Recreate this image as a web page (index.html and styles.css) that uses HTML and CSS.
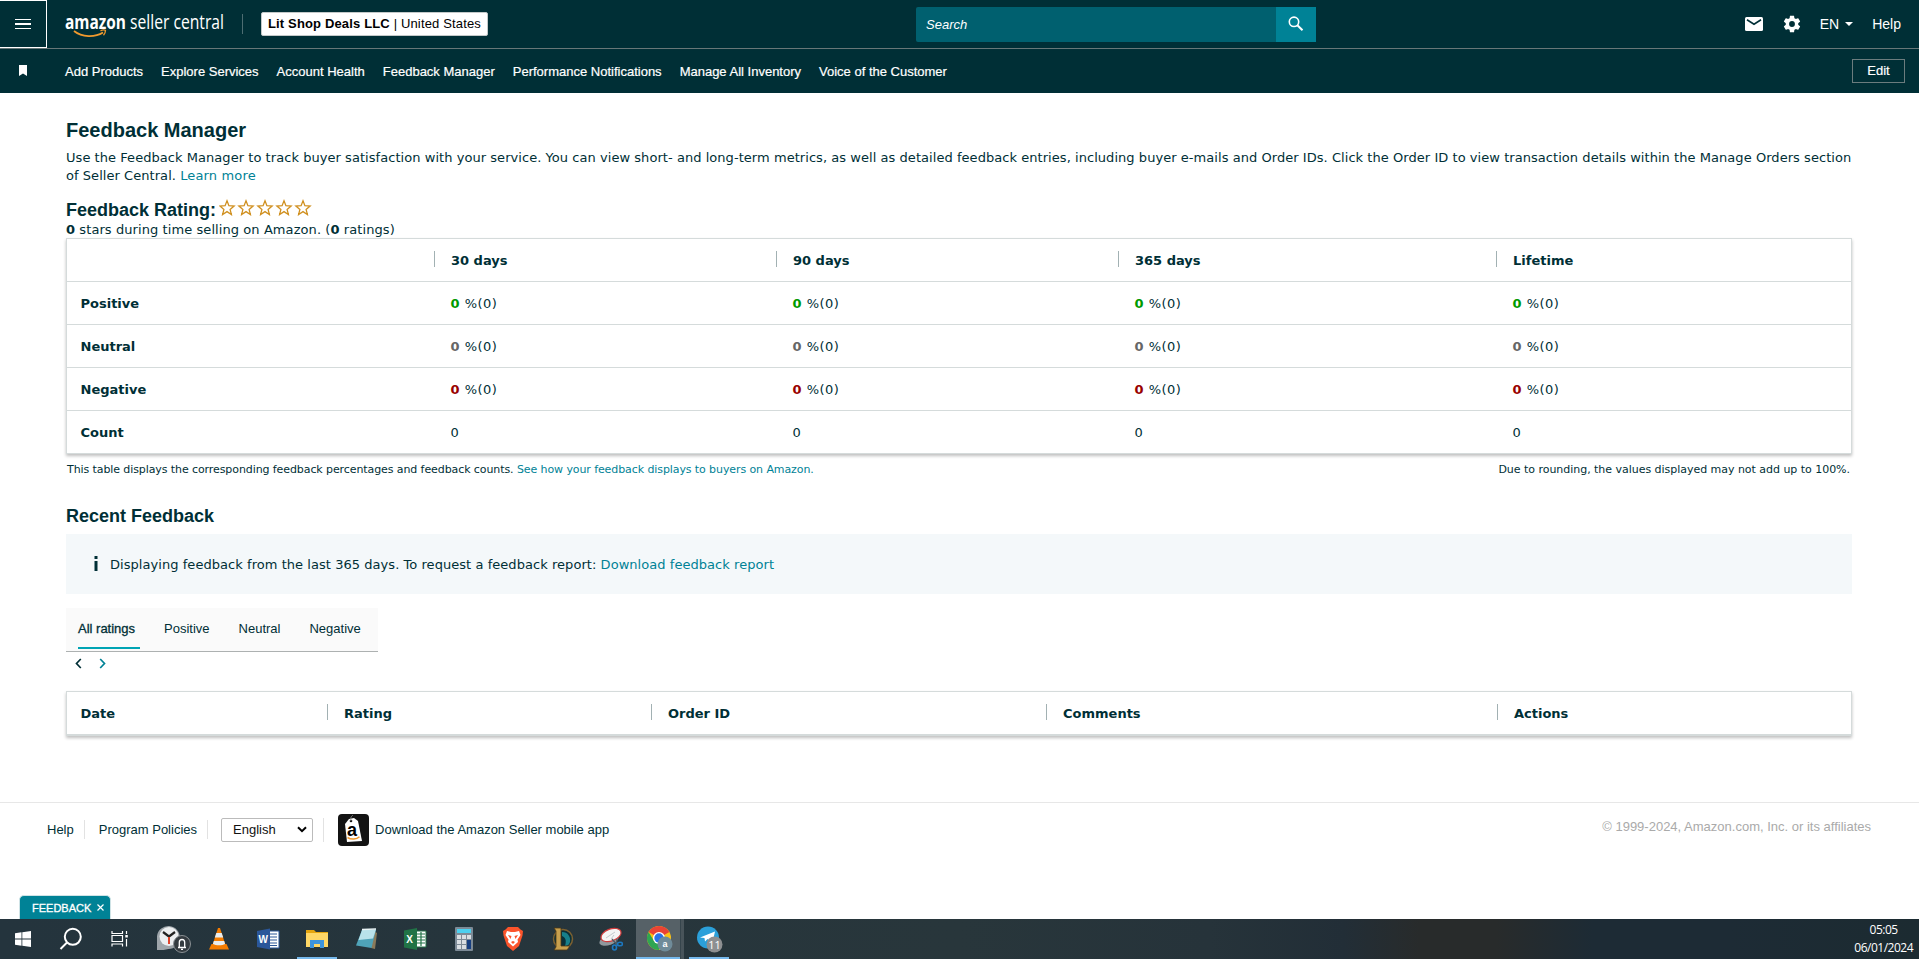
FILE: index.html
```html
<!DOCTYPE html>
<html lang="en">
<head>
  <meta charset="UTF-8">
  <meta name="viewport" content="width=device-width, initial-scale=1.0">
  <title>Feedback Manager</title>
  <link rel="stylesheet" href="styles.css">
</head>
<body>
  <header class="header">
    <div class="top-bar">
      <button class="menu-btn" aria-label="Menu"><span></span><span></span><span></span></button>
      <svg class="logo" width="162" height="40" viewBox="0 0 162 40">
        <text class="logo-bold" x="0" y="24" textLength="61" lengthAdjust="spacingAndGlyphs">amazon</text>
        <text class="logo-light" x="65" y="24" textLength="94" lengthAdjust="spacingAndGlyphs">seller central</text>
        <path d="M9 26c8 6.500 21 6.500 29 1.500" fill="none" stroke="#f19a2e" stroke-width="1.800"/>
        <path d="M35.500 25.800c2-1 4-1 5 -.5 0 2-.7 3.500-2 5" fill="none" stroke="#f19a2e" stroke-width="1.300"/>
      </svg>
      <div class="top-divider"></div>
      <button class="account"><b>Lit Shop Deals LLC</b>&nbsp;| United States</button>
      <div class="search">
        <div class="search-input">Search</div>
        <button class="search-btn" aria-label="Search">
          <svg width="18" height="18" viewBox="0 0 18 18" fill="none" stroke="#fff" stroke-width="1.600"><circle cx="7" cy="6.800" r="4.700"/><path d="M10.400 10.200L15.500 15.300" stroke-width="2"/></svg>
        </button>
      </div>
      <div class="top-links">
        <svg class="mail" width="18" height="14" viewBox="0 0 18 14"><rect width="18" height="14" rx="1.500" fill="#fff"/><path d="M2 2.800L9 7.200L16 2.800" fill="none" stroke="#002f36" stroke-width="1.600"/></svg>
        <svg class="gear" width="20" height="20" viewBox="0 0 24 24" fill="#fff"><path d="M19.430 12.980c.04-.32.07-.64.07-.98s-.03-.66-.07-.98l2.110-1.650c.19-.15.24-.42.12-.64l-2-3.460c-.12-.22-.39-.3-.61-.22l-2.490 1c-.52-.4-1.080-.73-1.690-.98l-.38-2.650C14.460 2.180 14.250 2 14 2h-4c-.25 0-.46.18-.49.42l-.38 2.650c-.61.25-1.170.59-1.690.98l-2.490-1c-.23-.09-.49 0-.61.22l-2 3.460c-.13.22-.07.49.12.64l2.110 1.650c-.04.32-.07.65-.07.98s.03.66.07.98l-2.110 1.650c-.19.15-.24.42-.12.64l2 3.460c.12.22.39.3.61.22l2.490-1c.52.4 1.080.73 1.690.98l.38 2.650c.03.24.24.42.49.42h4c.25 0 .46-.18.49-.42l.38-2.650c.61-.25 1.170-.59 1.690-.98l2.490 1c.23.09.49 0 .61-.22l2-3.460c.12-.22.07-.49-.12-.64l-2.110-1.650zM12 15.500a3.500 3.500 0 1 1 0-7 3.500 3.500 0 0 1 0 7z"/></svg>
        <span class="lang">EN</span>
        <span class="caret"></span>
        <span>Help</span>
      </div>
    </div>
    <nav class="nav-bar">
      <svg class="bookmark" width="8" height="11" viewBox="0 0 8 11"><path d="M0 0h8v11L4 8.500 0 11z" fill="#fff"/></svg>
      <a>Add Products</a>
      <a>Explore Services</a>
      <a>Account Health</a>
      <a>Feedback Manager</a>
      <a>Performance Notifications</a>
      <a>Manage All Inventory</a>
      <a>Voice of the Customer</a>
      <button class="edit-btn">Edit</button>
    </nav>
  </header>

  <main class="content">
    <h1>Feedback Manager</h1>
    <p class="intro"><span class="intro-line">Use the Feedback Manager to track buyer satisfaction with your service. You can view short- and long-term metrics, as well as detailed feedback entries, including buyer e-mails and Order IDs. Click the Order ID to view transaction details within the Manage Orders section</span><br>of Seller Central. <a>Learn more</a></p>

    <div class="rating">
      <h2>Feedback Rating:</h2>
      <svg class="stars" width="95" height="18" viewBox="0 0 95 18" fill="none" stroke="#d09020" stroke-width="1.300">
        <defs><path id="star" d="M8 1.800l1.900 4.900 5.200.3-4 3.400 1.300 5.100-4.400-2.900-4.400 2.900 1.300-5.100-4-3.400 5.200-.3z"/></defs>
        <use href="#star"/><use href="#star" x="19"/><use href="#star" x="38"/><use href="#star" x="57"/><use href="#star" x="76"/>
      </svg>
    </div>
    <p class="summary"><b>0</b> stars during time selling on Amazon. (<b>0</b> ratings)</p>

    <table class="panel metrics">
      <colgroup><col class="m1"><col class="m2"><col class="m2"><col class="m3"><col></colgroup>
      <tr><th></th><th>30 days</th><th>90 days</th><th>365 days</th><th>Lifetime</th></tr>
      <tr class="positive"><td>Positive</td><td><b>0</b> %(0)</td><td><b>0</b> %(0)</td><td><b>0</b> %(0)</td><td><b>0</b> %(0)</td></tr>
      <tr class="neutral"><td>Neutral</td><td><b>0</b> %(0)</td><td><b>0</b> %(0)</td><td><b>0</b> %(0)</td><td><b>0</b> %(0)</td></tr>
      <tr class="negative"><td>Negative</td><td><b>0</b> %(0)</td><td><b>0</b> %(0)</td><td><b>0</b> %(0)</td><td><b>0</b> %(0)</td></tr>
      <tr><td>Count</td><td>0</td><td>0</td><td>0</td><td>0</td></tr>
    </table>
    <div class="notes">
      <span class="note-left">This table displays the corresponding feedback percentages and feedback counts. <a>See how your feedback displays to buyers on Amazon.</a></span>
      <span class="note-right">Due to rounding, the values displayed may not add up to 100%.</span>
    </div>

    <h2 class="recent">Recent Feedback</h2>
    <div class="info">
      <svg width="4" height="15" viewBox="0 0 4 15" fill="#002f36"><rect x=".5" width="3" height="3"/><rect x=".5" y="5" width="3" height="10"/></svg>
      <span>Displaying feedback from the last 365 days. To request a feedback report: <a>Download feedback report</a></span>
    </div>

    <div class="tabs">
      <span class="tab active">All ratings</span>
      <span class="tab">Positive</span>
      <span class="tab">Neutral</span>
      <span class="tab">Negative</span>
    </div>
    <div class="pager">
      <svg width="7" height="11" viewBox="0 0 7 11" fill="none" stroke="#002f36" stroke-width="1.700"><path d="M5.800 1L1.500 5.500L5.800 10"/></svg>
      <svg width="7" height="11" viewBox="0 0 7 11" fill="none" stroke="#008296" stroke-width="1.700"><path d="M1.200 1L5.500 5.500L1.200 10"/></svg>
    </div>

    <table class="panel entries">
      <colgroup><col class="e1"><col class="e2"><col class="e3"><col class="e4"><col></colgroup>
      <tr><th>Date</th><th>Rating</th><th>Order ID</th><th>Comments</th><th>Actions</th></tr>
    </table>
  </main>

  <footer class="footer">
    <a>Help</a>
    <i class="sep"></i>
    <a>Program Policies</a>
    <i class="sep"></i>
    <div class="select">English
      <svg width="10" height="7" viewBox="0 0 10 7" fill="none" stroke="#000" stroke-width="2"><path d="M1 1.200L5 5.200L9 1.200"/></svg>
    </div>
    <i class="sep tall"></i>
    <svg class="app" width="31" height="32" viewBox="0 0 31 32">
      <rect width="31" height="32" rx="4" fill="#131313"/>
      <path d="M7 10l4-5 5-1 4 3 4 20-15 1z" fill="#fff"/>
      <circle cx="13" cy="7" r="1.300" fill="#131313"/>
      <path d="M13 7c-1-4 1-5 2-6" fill="none" stroke="#999" stroke-width=".8"/>
      <text x="9" y="21.500" class="app-letter">a</text>
      <path d="M9.500 23.500c4 2.500 9 2 12-.8" fill="none" stroke="#f19a2e" stroke-width="1.500"/>
    </svg>
    <a>Download the Amazon Seller mobile app</a>
    <span class="copyright">© 1999-2024, Amazon.com, Inc. or its affiliates</span>
  </footer>

  <div class="feedback-tab">FEEDBACK <svg width="7" height="7" viewBox="0 0 7 7" stroke="#fff" stroke-width="1.200"><path d="M.5.5l6 6M6.500.5l-6 6"/></svg></div>

  <div class="taskbar">
    <!-- start -->
    <div class="task"><svg width="24" height="24" viewBox="0 0 24 24" fill="#fff"><path d="M4 6.300l6.500-1v6.300H4zM11.300 5.200L20 4v7.600h-8.700zM4 12.400h6.500v6.300L4 17.800zM11.300 12.400H20V20l-8.700-1.200z"/></svg></div>
    <!-- search -->
    <div class="task left"><svg width="24" height="24" viewBox="0 0 24 24" fill="none" stroke="#fff" stroke-width="2"><circle cx="13.800" cy="9.800" r="8"/><path d="M8 15.500L1.500 22"/></svg></div>
    <!-- task view -->
    <div class="task left"><svg width="24" height="24" viewBox="0 0 24 24" fill="none" stroke="#fff" stroke-width="1.200"><path d="M4 4v2.500h10.500V4M4 19.500V17h10.500v2.500M4 8.500h10.500v6H4zM18.500 4v3M18.500 12v7.500"/><rect x="17.300" y="8" width="2.500" height="2.500" fill="#fff" stroke="none"/></svg></div>
    <!-- alarm -->
    <div class="task wide"><svg width="36" height="30" viewBox="0 0 36 30"><path d="M1 26V12A11.500 11.500 0 1 1 12.500 25l-5 1z" fill="#9ea5aa"/><circle cx="13" cy="12.500" r="9.500" fill="#eceff1"/><path d="M7 8l6 4.500L19 8" fill="none" stroke="#222" stroke-width="2.200"/><path d="M13 13v7" stroke="#e0452c" stroke-width="2"/><circle cx="26" cy="20" r="8.500" fill="#343b40" stroke="#8b9195"/><path d="M22 23.500h8M23.300 23v-4.500a2.700 3 0 0 1 5.400 0V23M25 25.300h2" fill="none" stroke="#fff" stroke-width="1.300"/></svg></div>
    <!-- vlc -->
    <div class="task"><svg width="24" height="24" viewBox="0 0 24 24"><path d="M4.500 17h15l2.500 5.500H2z" fill="#f57c00"/><path d="M11 1h2l5.500 17c-3 2-10 2-13 0z" fill="#f57c00"/><path d="M9.300 6h5.400l1.500 4.500H7.800zM6.800 14h10.400l.9 3c-3 1.800-9 1.800-12.200 0z" fill="#e8ecee"/></svg></div>
    <!-- word -->
    <div class="task"><svg width="24" height="24" viewBox="0 0 24 24"><path d="M12 4h11v17H12z" fill="#fff" stroke="#2b579a"/><path d="M14 7h7M14 10h7M14 13h7M14 16h7M14 18.500h7" stroke="#2b579a"/><path d="M1 4l13-2.500v21L1 20z" fill="#2b579a"/><text x="2.500" y="16" class="tile-letter">W</text></svg></div>
    <!-- explorer -->
    <div class="task open"><svg width="24" height="24" viewBox="0 0 24 24"><path d="M1 3h8l2 2h12v15H1z" fill="#e5a50f"/><path d="M1 6h22v14H1z" fill="#ffd766"/><path d="M5 21v-8h14v8h-4v-4H9v4z" fill="#3d94dd"/></svg></div>
    <!-- notepad -->
    <div class="task"><svg width="24" height="24" viewBox="0 0 24 24"><path d="M20 4l3 2-2 16-4-1z" fill="#8a7a5a"/><path d="M8 3l14-.5L17.500 21 2 18.500z" fill="#4fa3b8"/><path d="M8 3l14-.5-3 9L4.500 13z" fill="#b9e2ea"/><path d="M8 2.500l14-.5" stroke="#e9f3f5" stroke-width="1.500"/></svg></div>
    <!-- excel -->
    <div class="task"><svg width="24" height="24" viewBox="0 0 24 24"><path d="M12 4h11v16H12z" fill="#fff" stroke="#217346"/><path d="M14 7h8M14 10h8M14 13h8M14 16h8M18 5v14" stroke="#217346" stroke-width="1.200"/><path d="M1 3.500L14 1v22L1 20.500z" fill="#217346"/><text x="3.300" y="16" class="tile-letter">X</text></svg></div>
    <!-- calculator -->
    <div class="task"><svg width="24" height="24" viewBox="0 0 24 24"><rect x="3" width="18" height="24" rx="1" fill="#7c8a96"/><rect x="5" y="2" width="14" height="4" fill="#4cd0ef"/><path d="M5 8h4v4H5zM10 8h4v4h-4zM15 8h4v4h-4zM5 13h4v4H5zM10 13h4v4h-4zM5 18h4v4H5zM10 18h4v4h-4z" fill="#d9dee2"/><path d="M15 13h4v9h-4z" fill="#173f80"/></svg></div>
    <!-- brave -->
    <div class="task"><svg width="24" height="24" viewBox="0 0 24 24"><path d="M7 0h10l2.500 2.500L22 4l-.5 4.500L18 19l-6 5-6-5L2.500 8.500 2 4l2.500-1.500z" fill="#fb542b"/><path d="M6 4l4 1h4l4-1 1.500 4-3 4.500.5 2.500-5 4.500L7 15l.5-2.500L4.500 8z" fill="#fff"/><path d="M7 8l3.500 1-1 3zM17 8l-3.500 1 1 3zM10 15l2-1 2 1-2 2z" fill="#fb542b"/></svg></div>
    <!-- league -->
    <div class="task"><svg width="24" height="24" viewBox="0 0 24 24"><circle cx="13" cy="12" r="9.500" fill="#0b3038" stroke="#7d6130" stroke-width="1.500"/><path d="M12 5c6 0 9 5 8 10-1 3-3 4-5 4 2-6 0-9-3-10z" fill="#17808a"/><path d="M4 1h7v18h9l-3 4H4l2-3V4z" fill="#c8a04d" stroke="#4d3815" stroke-width=".8"/></svg></div>
    <!-- snipping tool -->
    <div class="task"><svg width="24" height="24" viewBox="0 0 24 24"><ellipse cx="10" cy="13" rx="10" ry="5" fill="#8f989d" transform="rotate(-20 10 13)"/><ellipse cx="12" cy="8" rx="10.500" ry="6" fill="#f4f4f4" stroke="#cf3b3b" stroke-width="1.200" transform="rotate(-20 12 8)"/><path d="M7 11l9-6M12 12l3-4" stroke="#c5c9cc"/><path d="M13 12l6 7M18 12l-1 7" stroke="#4b5b64" stroke-width="1.300"/><ellipse cx="15.500" cy="20.500" rx="2" ry="2.500" fill="none" stroke="#1c78c0" stroke-width="1.600"/><ellipse cx="21" cy="17" rx="2.500" ry="1.800" fill="none" stroke="#1c78c0" stroke-width="1.600"/></svg></div>
    <!-- chrome -->
    <div class="task current"><svg width="28" height="28" viewBox="0 0 28 28"><circle cx="13" cy="13" r="12" fill="#fbc116"/><path d="M13 13L2.600 7A12 12 0 0 1 23.400 7z" fill="#ea4335"/><path d="M2.600 7A12 12 0 0 0 13 25l5-9-10 0z" fill="#2fa552"/><circle cx="13" cy="13" r="6" fill="#fff"/><circle cx="13" cy="13" r="4.700" fill="#2a72e8"/><circle cx="19" cy="19" r="7.500" fill="#6f8b99"/><text x="19" y="22" class="badge-letter">a</text></svg></div>
    <!-- telegram -->
    <div class="task open"><svg width="28" height="28" viewBox="0 0 28 28"><circle cx="13" cy="12.500" r="11" fill="#2ba0da"/><path d="M5 12.500L20 6.500l-2.500 11-5-3.500L10 16.500l-.5-3.500z" fill="#fff"/><circle cx="19.500" cy="19.500" r="8" fill="#8d8f91"/><text x="19.500" y="23.500" class="badge-letter count">11</text></svg></div>
    <div class="clock"><span>05:05</span><span>06/01/2024</span></div>
  </div>
</body>
</html>
```
FILE: styles.css
```css
* {
  margin: 0;
  padding: 0;
  box-sizing: border-box;
}

body {
  font-family: "DejaVu Sans", Verdana, sans-serif;
  font-size: 13px;
  line-height: 18px;
  color: #002f36;
  background: #fff;
  height: 959px;
  overflow: hidden;
  display: flex;
  flex-direction: column;
}

a {
  text-decoration: none;
}

button {
  border: none;
  background: none;
  font: inherit;
  color: inherit;
}

/* Header */
.header {
  height: 93px;
  background: #002f36;
  color: #fff;
  font-family: "Liberation Sans", Arial, sans-serif;
}

.top-bar {
  display: flex;
  align-items: center;
  height: 49px;
  border-bottom: 1px solid #687778;
}

.menu-btn {
  width: 47px;
  height: 48px;
  border: 1px solid #fff;
  border-left: none;
  display: flex;
  flex-direction: column;
  align-items: center;
  justify-content: center;
  gap: 3px;
}

.menu-btn span {
  width: 16px;
  height: 1.500px;
  background: #fff;
}

.logo {
  margin-left: 18px;
  margin-top: 1px;
}

.logo-bold,
.logo-light {
  font-family: "Open Sans", sans-serif;
  font-size: 20px;
  fill: #fff;
}

.logo-bold {
  font-weight: 700;
}

.logo-light {
  font-weight: 400;
}

.top-divider {
  width: 1px;
  height: 20px;
  margin-left: 15px;
  background: #4d6d72;
}

.account {
  width: 227px;
  height: 24px;
  margin-left: 18px;
  padding: 0 6px;
  background: #fff;
  border: 1px solid #c4c9c9;
  border-radius: 2px;
  color: #000;
  text-align: left;
  white-space: nowrap;
  letter-spacing: 0.15px;
}

.search {
  display: flex;
  width: 400px;
  height: 35px;
  margin-left: 428px;
}

.search-input {
  width: 360px;
  padding: 9px 10px;
  background: #00606f;
  border-radius: 2px 0 0 2px;
  font-style: italic;
}

.search-btn {
  width: 40px;
  background: #008296;
  display: flex;
  align-items: center;
  justify-content: center;
}

.top-links {
  display: flex;
  align-items: center;
  margin-left: auto;
  margin-right: 18px;
  font-size: 14px;
}

.gear {
  margin-left: 19px;
}

.lang {
  margin-left: 18px;
}

.caret {
  margin: 0 19px 0 6px;
  border: 4px solid transparent;
  border-top-color: #fff;
  border-bottom: none;
}

.nav-bar {
  display: flex;
  align-items: center;
  height: 44px;
  padding-left: 19px;
  padding-top: 2px;
  gap: 18px;
  -webkit-text-stroke: 0.2px #fff;
}

.bookmark {
  margin-right: 20px;
  margin-top: -3px;
}

.edit-btn {
  width: 53px;
  height: 24px;
  margin-left: auto;
  margin-right: 14px;
  margin-top: -3px;
  border: 1px solid #6b7c7e;
  line-height: 20px;
}

/* Content */
.content {
  padding: 26px 67px 0 66px;
}

.content a {
  color: #008296;
}

h1,
h2 {
  font-family: "Liberation Sans", Arial, sans-serif;
  font-weight: 700;
}

h1 {
  font-size: 20px;
  line-height: 22px;
}

h2 {
  font-size: 18px;
  line-height: 22px;
}

.intro {
  margin-top: 8px;
  height: 36px;
  white-space: nowrap;
  letter-spacing: 0.05px;
}

.intro a {
  letter-spacing: 0.15px;
}

.rating {
  display: flex;
  align-items: center;
  margin-top: 6px;
  padding-top: 8px;
  height: 30px;
}

.stars {
  margin-left: 3px;
  margin-top: -4px;
}

.summary {
  height: 17px;
  letter-spacing: 0.08px;
}

.panel {
  width: 100%;
  table-layout: fixed;
  border-collapse: separate;
  border-spacing: 0;
  border: 1px solid #d5dbdb;
  box-shadow: 0 2px 3px rgba(0, 0, 0, 0.25);
  text-align: left;
}

.panel th,
.panel td {
  height: 43px;
  padding: 2px 0 0 16.500px;
  border-top: 1px solid #d5dbdb;
}

.panel td + td {
  letter-spacing: 0.5px;
}

.panel tr:last-child td + td {
  letter-spacing: 0;
}

.panel tr:first-child th {
  border-top: none;
  height: 42px;
}

.panel th {
  padding-left: 17px;
  background: linear-gradient(#a2b1b3, #a2b1b3) no-repeat 0 12px / 1px 16px;
}

.panel th:first-child,
.panel td:first-child {
  padding-left: 13.500px;
  font-weight: 700;
  background: none;
}

.m1 { width: 367px; }
.m2 { width: 342px; }
.m3 { width: 378px; }

.e1 { width: 260px; }
.e2 { width: 324px; }
.e3 { width: 395px; }
.e4 { width: 451px; }

.positive b { color: #009a00; }
.neutral b { color: #666; }
.negative b { color: #900; }

.notes {
  display: flex;
  justify-content: space-between;
  margin-top: 7px;
  padding: 0 2px 0 1px;
  font-size: 11px;
  white-space: nowrap;
}

.note-left {
  letter-spacing: -0.09px;
}

.note-right {
  letter-spacing: -0.03px;
}

.recent {
  margin-top: 26px;
}

.info {
  display: flex;
  align-items: center;
  gap: 12px;
  height: 60px;
  margin-top: 7px;
  padding-left: 28px;
  background: #f4f8fa;
  letter-spacing: 0.05px;
}

.info svg {
  margin-top: -2px;
}

.info span {
  padding-top: 1px;
}

.tabs {
  display: flex;
  gap: 29px;
  width: 312px;
  height: 44px;
  margin-top: 14px;
  padding: 0 12px;
  background: #fafafa;
  border-bottom: 1px solid #adb1b1;
  font-family: "Liberation Sans", Arial, sans-serif;
}

.tab {
  height: 41px;
  padding-top: 12px;
}

.tab.active {
  width: 62px;
  margin-right: -5px;
  border-bottom: 2px solid #00a4b4;
  -webkit-text-stroke: 0.3px #002f36;
}

.pager {
  display: flex;
  gap: 17px;
  margin-top: 6px;
  padding-left: 9px;
}

.entries {
  margin-top: 22px;
}

.entries.panel {
  border-bottom-width: 2px;
}

/* Footer */
.footer {
  display: flex;
  align-items: center;
  height: 54px;
  margin-top: 66px;
  padding-left: 47px;
  border-top: 1px solid #e7e7e7;
  font-family: "Liberation Sans", Arial, sans-serif;
}

.sep {
  width: 1px;
  height: 19px;
  margin: 0 14px 0 10px;
  background: #e2e2e2;
}

.sep.tall {
  height: 24px;
  margin: 0 14px 0 10px;
}

.select {
  display: flex;
  align-items: center;
  justify-content: space-between;
  width: 92px;
  height: 24px;
  margin-left: -1px;
  padding: 0 5px 0 11px;
  border: 1px solid #bbb;
  border-radius: 2px;
  color: #111;
}

.app {
  margin-right: 6px;
}

.app-letter {
  font-family: "Liberation Sans", Arial, sans-serif;
  font-size: 18px;
  font-weight: 700;
}

.copyright {
  margin-left: auto;
  margin-right: 48px;
  margin-top: -6px;
  color: #aaa;
}

.feedback-tab {
  display: flex;
  align-items: center;
  gap: 6px;
  width: 92px;
  height: 24px;
  margin: auto 0 0 19px;
  padding-left: 12px;
  background: #008296;
  border: 1px solid #cfe3e6;
  border-bottom: none;
  border-radius: 5px 5px 0 0;
  color: #fff;
  font: 11px "Liberation Sans", Arial, sans-serif;
  -webkit-text-stroke: 0.3px #fff;
}

/* Taskbar */
.taskbar {
  display: flex;
  gap: 1px;
  height: 40px;
  margin-left: -1px;
  flex-shrink: 0;
  background: linear-gradient(90deg, #24343d, #28363b 50%, #26333a 63%, #222e37 70%, #282b2b 74%, #282b2b 78%, #1d2b35 83%, #1d2b35 90%, #1c2b31);
}

.task {
  width: 48px;
  display: flex;
  align-items: center;
  justify-content: center;
}

.task.left svg {
  margin-left: -2px;
}

.task.wide svg {
  margin-left: 8px;
}

.task.open {
  background: linear-gradient(#76b9ed, #76b9ed) no-repeat 50% 100% / 40px 2px;
}

.task.current {
  background: linear-gradient(#76b9ed, #76b9ed) no-repeat 0 100% / 44px 2px, linear-gradient(90deg, #566167 44px, #36454c 44px, #36454c 45px, #48545a 45px);
}

.tile-letter {
  font: 700 10px "Liberation Sans", Arial, sans-serif;
  fill: #fff;
}

.badge-letter {
  font: 700 9px "Liberation Sans", Arial, sans-serif;
  fill: #fff;
  text-anchor: middle;
}

.badge-letter.count {
  font: 11px "Open Sans", sans-serif;
}

.clock {
  display: flex;
  flex-direction: column;
  align-items: center;
  margin-left: auto;
  margin-right: 6px;
  padding-top: 2px;
  font: 12px/18px "Open Sans", sans-serif;
  letter-spacing: -0.5px;
  color: #fff;
}
```
